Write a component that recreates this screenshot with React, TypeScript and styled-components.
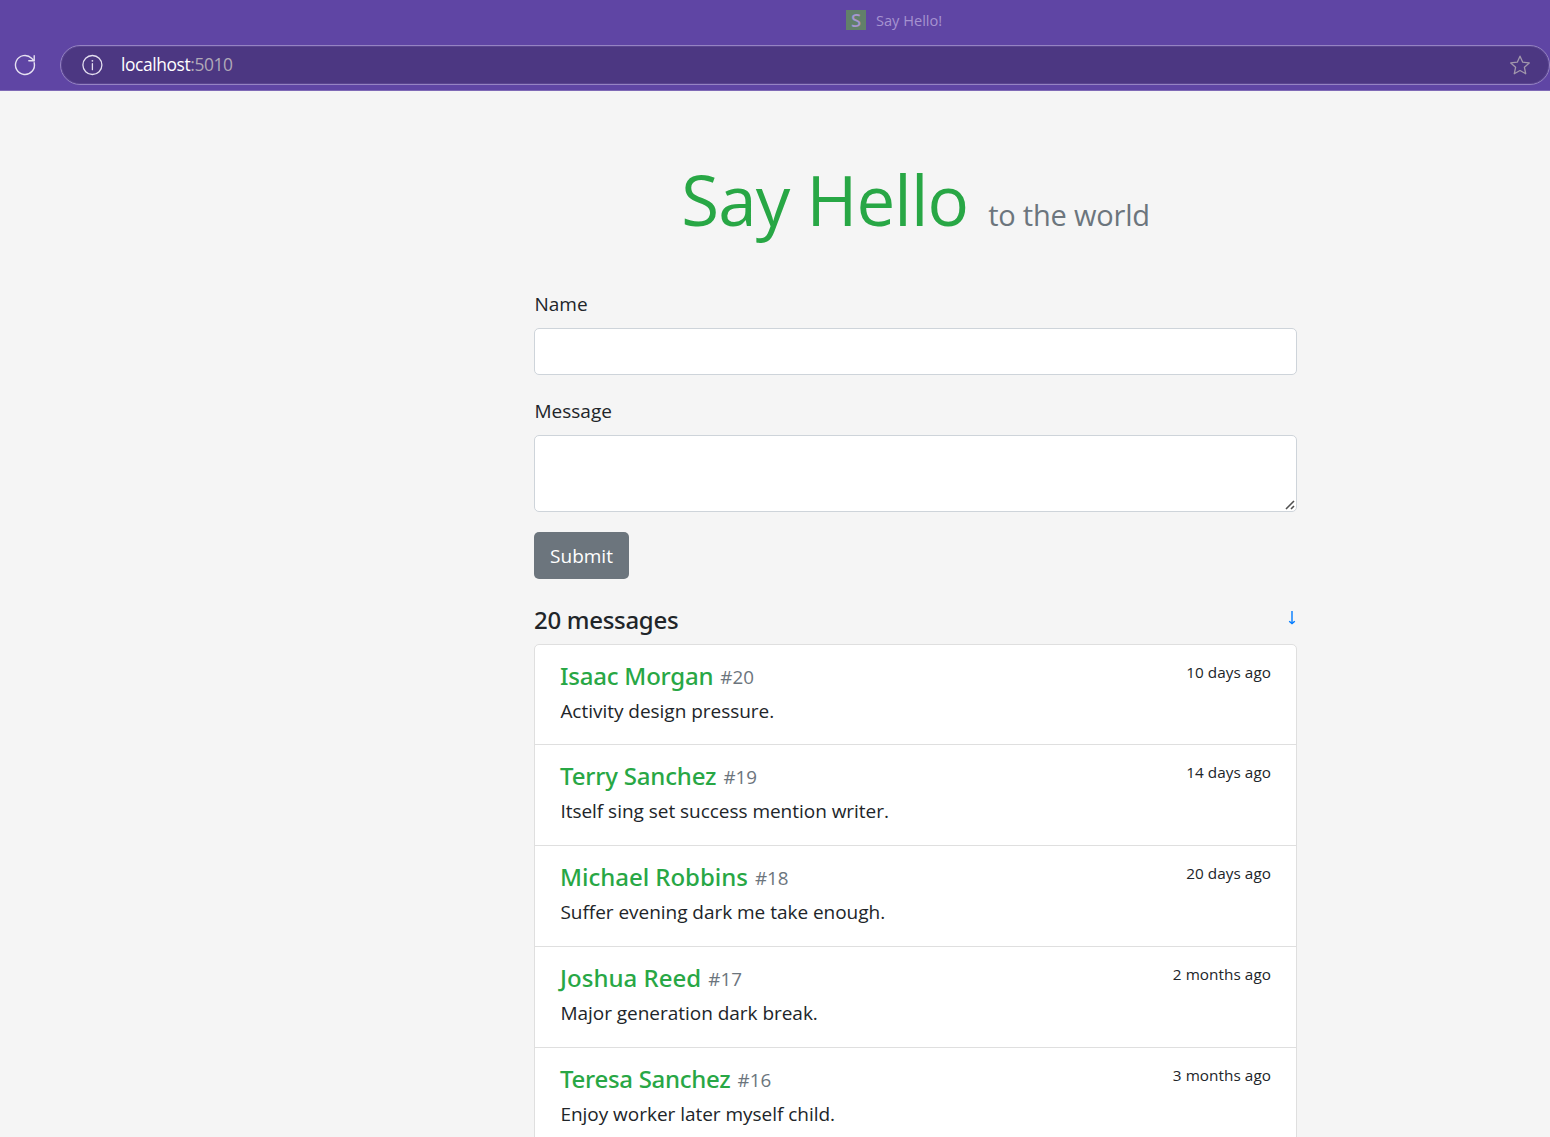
import React from "react";
import styled, { createGlobalStyle } from "styled-components";

const GlobalStyle = createGlobalStyle`
  *, *::before, *::after { box-sizing: border-box; }
  html, body { height: 1137px; overflow: hidden; }
  body {
    margin: 0;
    background: #f5f5f5;
    color: #212529;
    font-family: "Open Sans", "Noto Sans", sans-serif;
    font-size: 19px;
  }
  h1, h5, p { margin: 0; font-weight: 400; }
`;

const Chrome = styled.header`
  height: 91px;
  background: #5f45a4;
  border-bottom: 1px solid #7f6ab6;
  overflow: hidden;
`;

const TabStrip = styled.div`
  display: flex;
  align-items: center;
  height: 45px;
  padding: 0 0 5px 846px;
  gap: 10px;
`;

const Favicon = styled.span`
  display: flex;
  align-items: center;
  justify-content: center;
  width: 20px;
  height: 20px;
  background: #62806a;
  color: #a796cf;
  font: 500 18.5px/20px "Noto Sans", sans-serif;
`;

const TabTitle = styled.span`
  color: #a693d0;
  font-size: 14.6px;
  line-height: 20px;
`;

const Toolbar = styled.div`
  display: flex;
  align-items: center;
  height: 40px;
  padding-left: 13px;
`;

const AddressBar = styled.div`
  display: flex;
  align-items: center;
  flex: 1;
  height: 40px;
  margin-left: 23px;
  padding: 0 18px 0 20px;
  border: 1px solid #9583c3;
  border-radius: 20px;
  background: #4c3782;
  box-shadow: inset 0 0 0 1px #5a4590;
`;

const Url = styled.span`
  flex: 1;
  margin-left: 18px;
  color: #b0a9b8;
  font-size: 17.4px;
  line-height: 24px;
  letter-spacing: -0.4px;
  padding-bottom: 2px;
`;

const Host = styled.span`
  color: #fff;
`;

const Page = styled.main`
  width: 763px;
  margin-left: 534px;
`;

const Title = styled.h1`
  display: flex;
  align-items: baseline;
  justify-content: center;
  height: 84px;
  margin: 66px 0 47px;
  color: #28a745;
  font-size: 69px;
  line-height: 84px;
  letter-spacing: -0.85px;
  white-space: nowrap;
`;

const Tagline = styled.small`
  margin-left: 20px;
  color: #6c757d;
  font-size: 29px;
  letter-spacing: -0.2px;
`;

const Field = styled.div`
  display: flex;
  flex-direction: column;
  margin-bottom: 20px;
`;

const FieldLabel = styled.label`
  height: 30px;
  margin-bottom: 10px;
  padding-left: 0.5px;
  line-height: 32px;
`;

const TextInput = styled.input`
  width: 100%;
  height: 47px;
  border: 1px solid #ced4da;
  border-radius: 5px;
  background: #fff;
  outline: none;
`;

const TextAreaBox = styled.div`
  position: relative;
  height: 77px;

  svg {
    position: absolute;
    right: 2px;
    bottom: 2px;
    pointer-events: none;
  }
`;

const TextArea = styled.textarea`
  display: block;
  width: 100%;
  height: 77px;
  border: 1px solid #ced4da;
  border-radius: 5px;
  background: #fff;
  outline: none;
  resize: none;
`;

const SubmitButton = styled.button`
  display: block;
  width: 95px;
  height: 47px;
  padding: 1px 0 0;
  border: 0;
  border-radius: 5px;
  background: #6c757d;
  color: #fff;
  font: 400 19px/46px "Open Sans", sans-serif;
`;

const ListHeader = styled.div`
  display: flex;
  justify-content: space-between;
  height: 65px;
  padding-top: 26px;
`;

const Count = styled.h5`
  font: 500 24px/30px "Noto Sans", sans-serif;
  letter-spacing: -0.3px;
`;

const SortLink = styled.a`
  display: flex;
  padding: 6px 1px 0 0;
  color: #007bff;
`;

const MessageList = styled.div`
  border: 1px solid #dfdfdf;
  border-radius: 5px;
  background: #fff;
`;

const Item = styled.article<{ $height: number }>`
  height: ${(p) => p.$height}px;
  padding: 16px 25px 0;
  border-bottom: 1px solid #dfdfdf;
`;

const ItemHead = styled.div`
  display: flex;
  justify-content: space-between;
  height: 35px;
`;

const Author = styled.h5<{ $tracking: number }>`
  display: flex;
  color: #28a745;
  font: 500 24px/30px "Noto Sans", sans-serif;
  letter-spacing: ${(p) => p.$tracking}px;
  white-space: nowrap;
`;

const Serial = styled.small`
  margin-left: 7px;
  color: #6c757d;
  font: 400 18.8px/32px "Open Sans", sans-serif;
  letter-spacing: 0;
`;

const Time = styled.small`
  font-size: 15.3px;
  line-height: 22px;
  letter-spacing: 0.05px;
`;

const Body = styled.p`
  padding-left: 0.4px;
  line-height: 30px;
  letter-spacing: -0.03px;
`;

const messages = [
  { id: 20, name: "Isaac Morgan", body: "Activity design pressure.", time: "10 days ago", tracking: -0.22, height: 100 },
  { id: 19, name: "Terry Sanchez", body: "Itself sing set success mention writer.", time: "14 days ago", tracking: -0.17, height: 101 },
  { id: 18, name: "Michael Robbins", body: "Suffer evening dark me take enough.", time: "20 days ago", tracking: -0.03, height: 101 },
  { id: 17, name: "Joshua Reed", body: "Major generation dark break.", time: "2 months ago", tracking: 0.03, height: 101 },
  { id: 16, name: "Teresa Sanchez", body: "Enjoy worker later myself child.", time: "3 months ago", tracking: -0.28, height: 101 },
];

const ReloadIcon = () => (
  <svg width="24" height="24" viewBox="0 0 24 24" fill="none" stroke="#e6e1f1" strokeWidth="1.4" strokeLinecap="round">
    <path d="M21.2 9.8A9.5 9.5 0 1 1 18.6 5.2L20.8 7.4" />
    <path d="M21.2 2.8v4.9h-5.4" />
  </svg>
);

const InfoIcon = () => (
  <svg width="22" height="22" viewBox="0 0 22 22" fill="none" stroke="#e4dff0" strokeWidth="1.3">
    <circle cx="11.4" cy="11" r="9.5" />
    <path d="M11.4 9.7v6" strokeLinecap="round" />
    <circle cx="11.4" cy="6.8" r="0.9" fill="#e4dff0" stroke="none" />
  </svg>
);

const StarIcon = () => (
  <svg width="22" height="22" viewBox="0 0 22 22" fill="none" stroke="#a298ac" strokeWidth="1.3" strokeLinejoin="round">
    <path d="M11 2.2l2.75 6 6.5.75-4.85 4.4 1.35 6.45L11 16.55 5.25 19.8l1.35-6.45-4.85-4.4 6.5-.75z" />
  </svg>
);

const DownArrow = () => (
  <svg width="8" height="14" viewBox="0 0 8 14" fill="none" stroke="#007bff" strokeWidth="1.4">
    <path d="M4 0v12.6" />
    <path d="M1.2 10.2l2.8 2.4 2.8-2.4" />
  </svg>
);

const ResizeGrip = () => (
  <svg width="10" height="10" viewBox="0 0 10 10" fill="none" stroke="#505050" strokeWidth="1.6">
    <path d="M1 9L9 1M6 9L9 6" />
  </svg>
);

export default function App() {
  return (
    <>
      <GlobalStyle />
      <Chrome>
        <TabStrip>
          <Favicon>S</Favicon>
          <TabTitle>Say Hello!</TabTitle>
        </TabStrip>
        <Toolbar>
          <ReloadIcon />
          <AddressBar>
            <InfoIcon />
            <Url>
              <Host>localhost</Host>:5010
            </Url>
            <StarIcon />
          </AddressBar>
        </Toolbar>
      </Chrome>
      <Page>
        <Title>
          Say Hello<Tagline>to the world</Tagline>
        </Title>
        <form>
          <Field>
            <FieldLabel htmlFor="name">Name</FieldLabel>
            <TextInput id="name" />
          </Field>
          <Field>
            <FieldLabel htmlFor="message">Message</FieldLabel>
            <TextAreaBox>
              <TextArea id="message" />
              <ResizeGrip />
            </TextAreaBox>
          </Field>
          <SubmitButton type="button">Submit</SubmitButton>
        </form>
        <ListHeader>
          <Count>20 messages</Count>
          <SortLink>
            <DownArrow />
          </SortLink>
        </ListHeader>
        <MessageList>
          {messages.map((m) => (
            <Item key={m.id} $height={m.height}>
              <ItemHead>
                <Author $tracking={m.tracking}>
                  {m.name}
                  <Serial>#{m.id}</Serial>
                </Author>
                <Time>{m.time}</Time>
              </ItemHead>
              <Body>{m.body}</Body>
            </Item>
          ))}
        </MessageList>
      </Page>
    </>
  );
}
